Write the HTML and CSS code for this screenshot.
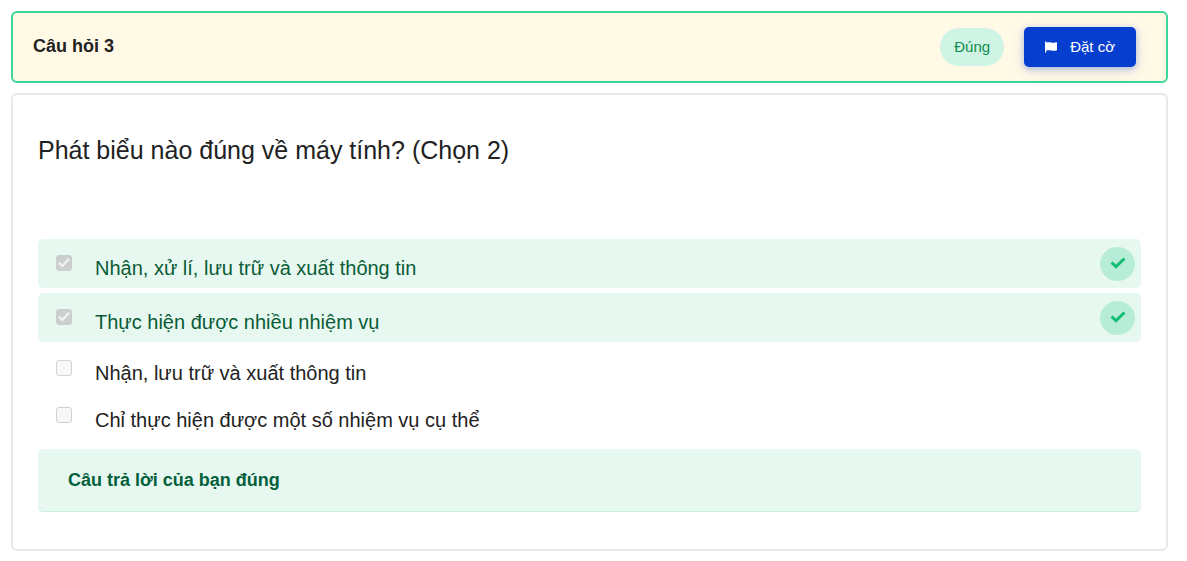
FILE: index.html
```html
<!DOCTYPE html>
<html lang="vi">
<head>
<meta charset="utf-8">
<meta name="viewport" content="width=device-width, initial-scale=1">
<title>Câu hỏi 3</title>
<link rel="stylesheet" href="styles.css">
</head>
<body>
<main class="quiz">
  <header class="question-header">
    <h1 class="question-number">Câu hỏi 3</h1>
    <div class="header-actions">
      <span class="status-pill">Đúng</span>
      <button class="flag-button" type="button">
        <svg class="flag-icon" viewBox="0 0 12 12" aria-hidden="true"><path d="M0 0.6h1.200v0.900c1.800-.5 3.300-.5 5 0 1.800.5 3.800.3 5.800-.2v7.900c-2.200.6-4 .7-5.700.3-1.800-.5-3.400-.5-5.100 0V11.600H0z"/></svg>
        <span>Đặt cờ</span>
      </button>
    </div>
  </header>
  <section class="question-card">
    <h2 class="question-text">Phát biểu nào đúng về máy tính? (Chọn 2)</h2>
    <ul class="options">
      <li class="option option-correct">
        <input class="option-box" type="checkbox" id="a1" checked disabled>
        <label class="option-label" for="a1">Nhận, xử lí, lưu trữ và xuất thông tin</label>
        <span class="correct-mark"><svg class="check-icon" viewBox="0 0 16 12" aria-hidden="true"><path d="M1.500 5.500 6 9.700 14.500 1.500"/></svg></span>
      </li>
      <li class="option option-correct">
        <input class="option-box" type="checkbox" id="a2" checked disabled>
        <label class="option-label" for="a2">Thực hiện được nhiều nhiệm vụ</label>
        <span class="correct-mark"><svg class="check-icon" viewBox="0 0 16 12" aria-hidden="true"><path d="M1.500 5.500 6 9.700 14.500 1.500"/></svg></span>
      </li>
      <li class="option">
        <input class="option-box" type="checkbox" id="a3" disabled>
        <label class="option-label" for="a3">Nhận, lưu trữ và xuất thông tin</label>
      </li>
      <li class="option">
        <input class="option-box" type="checkbox" id="a4" disabled>
        <label class="option-label" for="a4">Chỉ thực hiện được một số nhiệm vụ cụ thể</label>
      </li>
    </ul>
    <p class="feedback">Câu trả lời của bạn đúng</p>
  </section>
</main>
</body>
</html>
```
FILE: styles.css
```css
* { box-sizing: border-box; }

body {
  margin: 0;
  background: #fff;
  color: #222;
  font-family: "Liberation Sans", Arial, sans-serif;
}

.quiz {
  display: flex;
  flex-direction: column;
  gap: 10px;
  padding: 11px 19px 10px 11px;
}

.question-header {
  display: flex;
  align-items: center;
  justify-content: space-between;
  padding: 14px 30px 14px 20px;
  border: 2px solid #3dd598;
  border-radius: 6px;
  background: #fff9e6;
}

.question-number {
  margin: 0;
  padding-bottom: 2px;
  font-size: 18px;
  line-height: 24px;
}

.header-actions {
  display: flex;
  align-items: center;
  gap: 20px;
}

.status-pill {
  padding: 8px 14px;
  border-radius: 20px;
  background: #cff3e4;
  color: #118c4f;
  font-size: 15px;
  line-height: 22px;
}

.flag-button {
  display: flex;
  align-items: center;
  gap: 13px;
  padding: 9px 21px;
  border: 0;
  border-radius: 5px;
  background: #063fd0;
  box-shadow: 0 2px 6px rgba(6, 63, 208, 0.3), 0 4px 16px rgba(6, 63, 208, 0.1);
  color: #fff;
  font: 15px/22px "Liberation Sans", Arial, sans-serif;
}

.flag-icon {
  width: 12px;
  height: 12px;
  fill: currentColor;
}

.question-card {
  padding: 37px 25px;
  border: 2px solid #e8e8e8;
  border-radius: 6px;
}

.question-text {
  margin: 0 0 70px;
  font-size: 25px;
  font-weight: 400;
  line-height: 37px;
}

.options {
  display: flex;
  flex-direction: column;
  gap: 5px;
  margin: 0 0 13px;
  padding: 0;
  list-style: none;
}

.option {
  display: flex;
  align-items: flex-start;
  gap: 23px;
  padding: 13px 6px 0 18px;
  min-height: 42px;
}

.option-correct {
  min-height: 49px;
  padding-top: 16px;
  border-radius: 5px;
  background: #e7f8f0;
  color: #0a5c36;
}

.option-box {
  flex: none;
  display: grid;
  place-items: center;
  width: 16px;
  height: 16px;
  margin: 0;
  border: 1px solid #d1d1d1;
  border-radius: 3px;
  background: #f8f8f8;
  appearance: none;
}

.option-box:checked {
  background: #cdcfce;
  border-color: #cdcfce;
}

.option-box:checked::before {
  content: "";
  width: 12px;
  height: 10px;
  background: #eef2f0;
  clip-path: polygon(0 55%, 15% 40%, 36% 62%, 84% 0, 100% 15%, 38% 96%);
}

.option-label {
  flex: 1;
  font-size: 20px;
  line-height: 26px;
}

.correct-mark {
  display: grid;
  place-items: center;
  width: 35px;
  height: 34px;
  margin-top: -8px;
  border-radius: 50%;
  background: #b7edd6;
}

.check-icon {
  width: 16px;
  height: 12px;
  margin-bottom: 3px;
  fill: none;
  stroke: #12bd75;
  stroke-width: 3;
}

.feedback {
  margin: 0;
  padding: 18px 30px;
  border-bottom: 1px solid #ccefe1;
  border-radius: 5px;
  background: #e7f8f0;
  color: #04603a;
  font-size: 18px;
  font-weight: 700;
  line-height: 26px;
}
```
